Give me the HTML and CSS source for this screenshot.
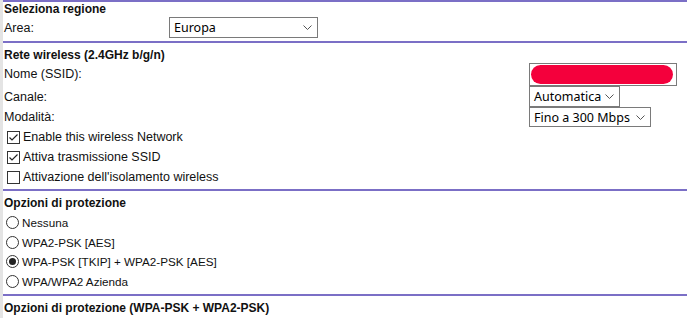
FILE: index.html
```html
<!DOCTYPE html>
<html lang="it">
  <head>
    <meta charset="UTF-8" />
    <title>Impostazioni wireless</title>
    <link rel="stylesheet" href="styles.css">
  </head>
  <body>
    <div class="page">
      <section class="block">
        <h3 class="title">Seleziona regione</h3>
        <div class="row region">
          <span class="label">Area:</span>
          <div class="select wide">
            <span>Europa</span>
            <svg class="chev" width="9" height="5" viewBox="0 0 9 5"><path d="M0.5 0.5 L4.5 4.5 L8.5 0.5" fill="none" stroke="#555" stroke-width="1"/></svg>
          </div>
        </div>
      </section>

      <section class="block">
        <h3 class="title">Rete wireless (2.4GHz b/g/n)</h3>
        <div class="grid wireless">
          <span class="label">Nome (SSID):</span>
          <div class="textbox"><span class="redact"></span></div>
          <span class="label">Canale:</span>
          <div class="select channel">
            <span>Automatica</span>
            <svg class="chev" width="9" height="5" viewBox="0 0 9 5"><path d="M0.5 0.5 L4.5 4.5 L8.5 0.5" fill="none" stroke="#555" stroke-width="1"/></svg>
          </div>
          <span class="label">Modalità:</span>
          <div class="select mode">
            <span>Fino a 300 Mbps</span>
            <svg class="chev" width="9" height="5" viewBox="0 0 9 5"><path d="M0.5 0.5 L4.5 4.5 L8.5 0.5" fill="none" stroke="#555" stroke-width="1"/></svg>
          </div>
        </div>
        <ul class="options checks">
          <li><span class="box"><svg width="11" height="11" viewBox="0 0 11 11"><path d="M1.5 5.5 L4 8 L9.5 2.5" fill="none" stroke="#222" stroke-width="1.2"/></svg></span>Enable this wireless Network</li>
          <li><span class="box"><svg width="11" height="11" viewBox="0 0 11 11"><path d="M1.5 5.5 L4 8 L9.5 2.5" fill="none" stroke="#222" stroke-width="1.2"/></svg></span>Attiva trasmissione SSID</li>
          <li><span class="box"></span>Attivazione dell'isolamento wireless</li>
        </ul>
      </section>

      <section class="block">
        <h3 class="title">Opzioni di protezione</h3>
        <ul class="options radios">
          <li><span class="dot"></span>Nessuna</li>
          <li><span class="dot"></span>WPA2-PSK [AES]</li>
          <li><span class="dot on"></span>WPA-PSK [TKIP] + WPA2-PSK [AES]</li>
          <li><span class="dot"></span>WPA/WPA2 Azienda</li>
        </ul>
      </section>

      <section class="block">
        <h3 class="title">Opzioni di protezione (WPA-PSK + WPA2-PSK)</h3>
      </section>
    </div>
  </body>
</html>
```
FILE: styles.css
```css
html,
body {
  margin: 0;
  padding: 0;
  background: #fff;
  overflow: hidden;
}

.page {
  border-left: 3px solid #e4e4e4;
  min-height: 100vh;
  font-family: "Liberation Sans", Arial, sans-serif;
  font-size: 12.5px;
  color: #111;
}

.block {
  border-top: 2px solid #7b6fc6;
  padding-bottom: 2px;
}

.title {
  margin: 0;
  padding: 0 0 0 1px;
  font-size: 12px;
  font-weight: bold;
  line-height: 14px;
}

.block + .block .title {
  padding-top: 5px;
}

.label {
  padding-left: 1px;
}

.row {
  display: flex;
  align-items: center;
}

.region {
  height: 23px;
}

.region .label {
  width: 165px;
}

.grid {
  display: grid;
  grid-template-columns: 526px auto;
  align-items: center;
  justify-items: start;
}

.select {
  box-sizing: border-box;
  display: flex;
  align-items: center;
  justify-content: space-between;
  border: 1px solid #7a7a7a;
  background: #fff;
  padding: 0 5px 0 4px;
  font-family: "Noto Sans", sans-serif;
  font-size: 12.5px;
  color: #000;
  height: 21px;
}

.wide {
  width: 149px;
}

.channel {
  width: 91px;
  height: 21px;
}

.mode {
  width: 122px;
  height: 20px;
}

.chev {
  display: block;
}

.textbox {
  box-sizing: border-box;
  width: 148px;
  height: 23px;
  border: 1px solid #7a7a7a;
  padding: 1px 3px 1px 1px;
  margin-top: 1px;
}

.redact {
  display: block;
  height: 19px;
  border-radius: 10px;
  background: #f4003c;
}

.options {
  list-style: none;
  margin: 0;
  padding: 0;
}

.options li {
  display: flex;
  align-items: center;
}

.checks li {
  height: 20px;
}

.box {
  box-sizing: border-box;
  width: 13px;
  height: 13px;
  border: 1px solid #333;
  margin: 0 3px 0 4px;
  display: flex;
  align-items: center;
  justify-content: center;
  background: #fff;
}

.box svg {
  display: block;
}

.radios {
  padding: 3px 0 1px;
  font-size: 11.7px;
}

.radios li {
  height: 19.5px;
}

.dot {
  box-sizing: border-box;
  width: 13px;
  height: 13px;
  border: 1px solid #333;
  border-radius: 50%;
  margin: 0 3px 0 3px;
  display: flex;
  align-items: center;
  justify-content: center;
}

.dot.on::after {
  content: "";
  width: 7px;
  height: 7px;
  border-radius: 50%;
  background: #222;
}
```
